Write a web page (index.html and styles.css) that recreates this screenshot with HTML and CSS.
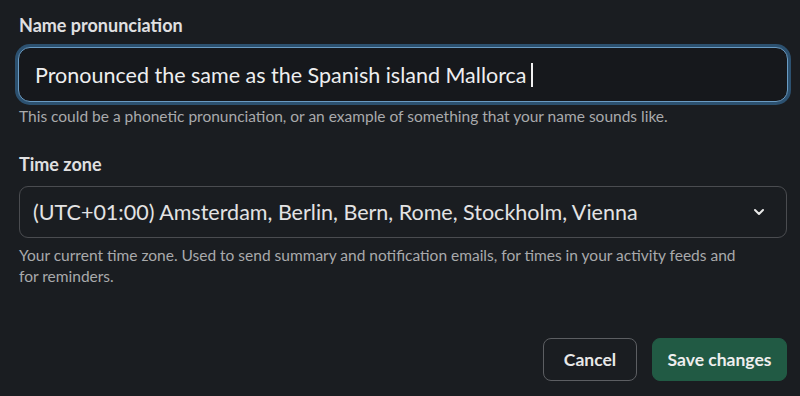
FILE: index.html
```html
<!DOCTYPE html>
<html lang="en">
<head>
    <meta charset="UTF-8">
    <meta name="viewport" content="width=device-width, initial-scale=1.0">
    <title>Profile settings</title>
    <link rel="stylesheet" href="styles.css">
</head>
<body>
    <form class="settings">
        <!-- Name pronunciation -->
        <div class="field">
            <label class="field-label">Name pronunciation</label>
            <div class="text-input focused">
                <span class="value">Pronounced the same as the Spanish island Mallorca</span><span class="caret"></span>
            </div>
            <p class="hint">This could be a phonetic pronunciation, or an example of something that your name sounds like.</p>
        </div>

        <!-- Time zone -->
        <div class="field field-tz">
            <label class="field-label">Time zone</label>
            <div class="select">
                <span class="value">(UTC+01:00) Amsterdam, Berlin, Bern, Rome, Stockholm, Vienna</span>
                <svg class="chevron" width="14" height="14" viewBox="0 0 14 14">
                    <path d="M3 5l4 4 4-4" fill="none" stroke="#e8e8e8" stroke-width="2" stroke-linecap="round" stroke-linejoin="round"/>
                </svg>
            </div>
            <p class="hint hint-wrap">Your current time zone. Used to send summary and notification emails, for times in your activity feeds and for reminders.</p>
        </div>

        <div class="actions">
            <button type="button" class="btn btn-cancel">Cancel</button>
            <button type="button" class="btn btn-save">Save changes</button>
        </div>
    </form>
</body>
</html>
```

FILE: styles.css
```css
* {
    box-sizing: border-box;
}
html, body {
    margin: 0;
    height: 100%;
    background-color: #1a1d21;
}
body {
    font-family: Lato, "Noto Sans", sans-serif;
    color: #d1d2d3;
    overflow: hidden;
}
.settings {
    display: flex;
    flex-direction: column;
    padding: 12px 13px 0 19px;
}
.field {
    display: flex;
    flex-direction: column;
}
.field-tz {
    margin-top: 24px;
}
.field-label {
    font-size: 18px;
    font-weight: 700;
    line-height: 26px;
    color: #e0e0e1;
}
.text-input {
    display: flex;
    align-items: center;
    height: 55px;
    margin: 9px -1px 0 -1px;
    padding: 0 16px;
    border: 1px solid #6a9bc3;
    border-radius: 12px;
    background-color: #16181c;
    box-shadow: 0 0 0 3px #2c5170;
    font-size: 21.5px;
    color: #eeeeef;
}
.caret {
    display: inline-block;
    width: 2px;
    height: 24px;
    margin-left: 5px;
    background-color: #f0f0f0;
}
.select {
    display: flex;
    align-items: center;
    justify-content: space-between;
    height: 52px;
    margin-top: 9px;
    padding: 0 20px 0 13px;
    border: 1px solid #4a4c50;
    border-radius: 9px;
    font-size: 21.5px;
    color: #e3e3e4;
}
.hint {
    margin: 4px 0 0;
    font-size: 15.5px;
    line-height: 21px;
    color: #a9aaac;
}
.hint-wrap {
    max-width: 725px;
    margin-top: 7px;
}
.actions {
    display: flex;
    justify-content: flex-end;
    gap: 15px;
    margin-top: 51px;
}
.btn {
    height: 43px;
    padding: 0;
    border-radius: 8px;
    font-family: Lato, "Noto Sans", sans-serif;
    font-size: 17.5px;
    font-weight: 700;
    white-space: nowrap;
}
.btn-cancel {
    width: 94px;
    background-color: #1a1d21;
    border: 1px solid #5c5e62;
    color: #e8e8e8;
}
.btn-save {
    width: 135px;
    background-color: #215a44;
    border: 1px solid #215a44;
    color: #eeeeee;
}
```
